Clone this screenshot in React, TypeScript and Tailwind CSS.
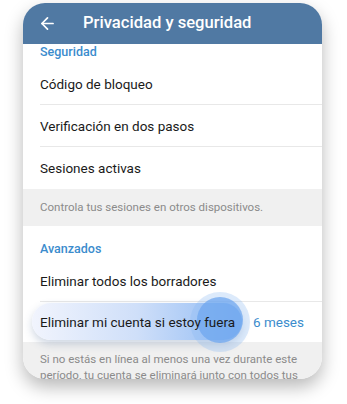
import React from 'react';
import { ArrowLeft } from 'lucide-react';

const font = { fontFamily: 'Roboto, "Noto Sans", sans-serif' };

const Row: React.FC<{ label: string; divider?: boolean }> = ({ label, divider }) => (
  <div className="relative h-[42px] shrink-0 flex items-center pl-[17px] text-[13.5px] text-[#1a1a1a]">
    {label}
    {divider && <div className="absolute left-[17px] right-0 bottom-0 h-px bg-[#e8e8e8]" />}
  </div>
);

const App: React.FC = () => {
  return (
    <div className="w-[347px] h-[404px] bg-white pt-[3px] pl-[23px]" style={font}>
      <div className="w-[299px] h-[376px] rounded-[22px] overflow-hidden bg-white shadow-[0_8px_18px_rgba(0,0,0,0.28)] flex flex-col">
        <div className="h-[41px] shrink-0 bg-[#5079a3] flex items-center text-white">
          <ArrowLeft className="ml-[15px] w-[19px] h-[19px]" strokeWidth={2.2} />
          <span className="ml-[26px] text-[16.6px] font-medium">Privacidad y seguridad</span>
        </div>

        <div className="h-[19px] shrink-0 pl-[17px] text-[12.5px] font-medium leading-[16px] text-[#3b8ccd]">Seguridad</div>
        <Row label="Código de bloqueo" divider />
        <Row label="Verificación en dos pasos" divider />
        <Row label="Sesiones activas" />

        <div className="h-[37px] shrink-0 bg-[#f0f0f0] flex items-center pl-[17px] text-[11.5px] text-[#8b8b8b]">
          Controla tus sesiones en otros dispositivos.
        </div>

        <div className="shrink-0 pt-[15px] pb-[3px] pl-[17px] text-[12.5px] font-medium leading-[16px] text-[#3b8ccd]">Avanzados</div>
        <Row label="Eliminar todos los borradores" divider />

        <div className="relative h-[40px] shrink-0 flex items-center text-[13.5px] whitespace-nowrap">
          <div className="absolute left-[9px] top-[1px] w-[210px] h-[37px] rounded-full bg-gradient-to-r from-[#f1f4fd] via-[#cfdff9] to-[#8fbaf3] shadow-[0_4px_8px_rgba(60,90,140,0.25)]" />
          <div className="absolute left-[167px] top-[-10px] w-[60px] h-[60px] rounded-full bg-[#8ab8f3]/30" />
          <div className="absolute left-[174px] top-[-5px] w-[46px] h-[46px] rounded-full bg-[#6fa7ef]/75" />
          <span className="relative pl-[17px] text-[#1a1a1a]">Eliminar mi cuenta si estoy fuera</span>
          <span className="relative ml-auto mr-[18px] text-[#3b8ccd]">6 meses</span>
        </div>

        <div className="flex-1 bg-[#f0f0f0] pt-[9px] pl-[17px] pr-[10px] text-[11.5px] leading-[16px] text-[#8b8b8b]">
          Si no estás en línea al menos una vez durante este período, tu cuenta se eliminará junto con todos tus mensajes y contactos.
        </div>
      </div>
    </div>
  );
};

export default App;
